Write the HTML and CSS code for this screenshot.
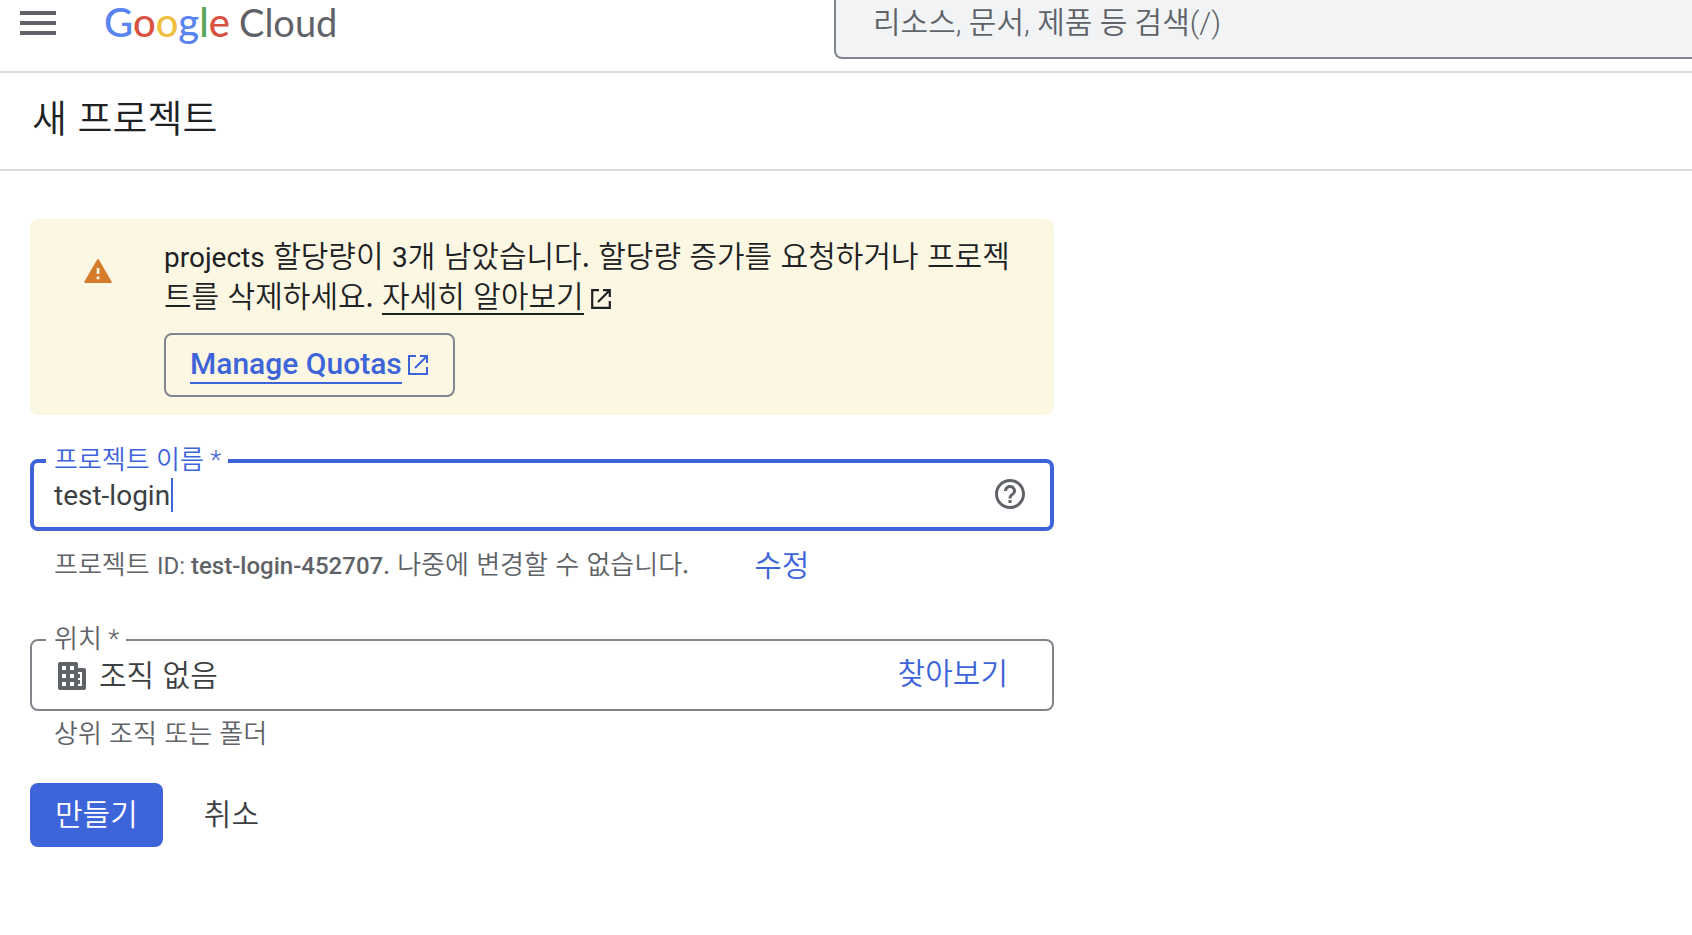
FILE: index.html
```html
<!DOCTYPE html>
<html lang="ko">
<head>
<meta charset="utf-8">
<meta name="viewport" content="width=device-width, initial-scale=1">
<title>새 프로젝트 – Google Cloud</title>
<link rel="stylesheet" href="styles.css">
</head>
<body>
<header class="topbar">
  <div class="brand">
    <button class="menu" type="button" aria-label="탐색 메뉴">
      <svg width="36" height="24" viewBox="0 0 36 24" aria-hidden="true"><path d="M0 0h36v4H0zM0 10h36v4H0zM0 20h36v4H0z" fill="currentColor"/></svg>
    </button>
    <a class="logo" href="#"><span class="logo-google"><span class="c-blue">G</span><span class="c-red">o</span><span class="c-yellow">o</span><span class="c-blue">g</span><span class="c-green">l</span><span class="c-red">e</span></span><span class="logo-cloud">Cloud</span></a>
  </div>
  <input class="search" type="search" aria-label="검색" placeholder="리소스, 문서, 제품 등 검색(/)">
</header>
<div class="titlebar"><h1 class="title">새 프로젝트</h1></div>
<main class="content">
  <section class="banner">
    <svg class="warn" width="28" height="24" viewBox="0 0 28 24" aria-hidden="true"><path fill-rule="evenodd" d="M14.8.6l12.9 22.1c.4.7 0 1.3-.7 1.3H1c-.7 0-1.1-.6-.7-1.3L13.200.6c.4-.7 1.200-.7 1.600 0zM12.700 9v6h2.700V9zM12.700 17.500v2.700h2.700v-2.700z" fill="#d47b2c"/></svg>
    <div class="banner-body">
      <p class="banner-text"><span class="latin">projects</span> 할당량이 <span class="latin">3</span>개 남았습니다. 할당량 증가를 요청하거나 프로젝트를 삭제하세요. <a class="more" href="#">자세히 알아보기</a><svg class="ext" width="20" height="20" viewBox="0 0 20 20" aria-hidden="true"><path d="M8 1.200H1.200v17.600h17.600V12M12 1.200h6.800V8M18.500 1.500L7 13" fill="none" stroke="currentColor" stroke-width="2.200"/></svg></p>
      <a class="quotas" href="#"><span class="quotas-text">Manage Quotas</span><svg width="20" height="20" viewBox="0 0 20 20" aria-hidden="true"><path d="M8 1H1v18h18V12M12 1h7V8M18.500 1.500L7 13" fill="none" stroke="currentColor" stroke-width="2"/></svg></a>
    </div>
  </section>

  <form class="form">
    <fieldset class="field field-active">
      <legend class="legend"><label for="name">프로젝트 이름 *</label></legend>
      <div class="row">
        <input class="value latin" id="name" type="text" value="test-login" spellcheck="false">
        <span class="caret"></span>
        <button class="help" type="button" aria-label="도움말">
          <svg width="30" height="30" viewBox="2 2 20 20" aria-hidden="true"><path d="M11 18h2v-2h-2v2zm1-16C6.480 2 2 6.480 2 12s4.480 10 10 10 10-4.480 10-10S17.520 2 12 2zm0 18c-4.410 0-8-3.590-8-8s3.590-8 8-8 8 3.590 8 8-3.590 8-8 8zm0-14c-2.210 0-4 1.790-4 4h2c0-1.100.9-2 2-2s2 .9 2 2c0 2-3 1.750-3 5h2c0-2.250 3-2.500 3-5 0-2.210-1.790-4-4-4z" fill="currentColor"/></svg>
        </button>
      </div>
    </fieldset>
    <div class="hint hint-id">
      <span>프로젝트 <span class="latin-small">ID: <b>test-login-452707.</b></span> 나중에 변경할 수 없습니다.</span>
      <button class="link" type="button">수정</button>
    </div>

    <fieldset class="field">
      <legend class="legend"><label for="place">위치 *</label></legend>
      <div class="row row-place">
        <svg class="org" width="28" height="28" viewBox="0 0 28 28" aria-hidden="true"><path fill-rule="evenodd" d="M2 0h16a2 2 0 0 1 2 2v4h6a2 2 0 0 1 2 2v18a2 2 0 0 1-2 2H2a2 2 0 0 1-2-2V2a2 2 0 0 1 2-2zM4 4v4h4V4zM12 4v4h4V4zM4 12v4h4v-4zM12 12v4h4v-4zM4 20v4h4v-4zM12 20v4h4v-4zM20 10v2h2v4h-2v2h2v4h-2v2h4V10z" fill="currentColor"/></svg>
        <input class="value" id="place" type="text" value="조직 없음" readonly>
        <button class="link" type="button">찾아보기</button>
      </div>
    </fieldset>
    <p class="hint">상위 조직 또는 폴더</p>
    <div class="actions">
      <button class="btn primary" type="submit">만들기</button>
      <button class="btn plain" type="button">취소</button>
    </div>
  </form>
</main>
</body>
</html>
```
FILE: styles.css
```css
* { box-sizing: border-box; }

body {
  margin: 0;
  background: #fff;
  color: #202124;
  font-family: "Noto Sans CJK KR", sans-serif;
  font-size: 30px;
  font-weight: 350;
  line-height: 40px;
}

button, input {
  font: inherit;
  color: inherit;
  background: none;
  border: 0;
  padding: 0;
  margin: 0;
}

button { cursor: pointer; }
svg { display: block; flex: none; }

.latin { font-family: Roboto, "Noto Sans CJK KR", sans-serif; font-size: 28px; font-weight: 400; line-height: 32px; }
.latin-small { font-family: Roboto, sans-serif; font-size: 24px; font-weight: 400; line-height: 28px; }
.latin-small b { font-weight: 500; }

.topbar {
  display: grid;
  grid-template-columns: 834px 1fr;
  align-items: start;
  height: 73px;
  border-bottom: 2px solid #dadce0;
}

.brand { display: flex; align-items: center; gap: 48px; height: 46px; padding-left: 20px; }
.menu { color: #5f6368; }

.logo {
  display: flex;
  align-items: baseline;
  gap: 9px;
  padding-bottom: 3px;
  color: #5f6368;
  font-family: Lato, sans-serif;
  font-size: 40px;
  font-weight: 400;
  text-decoration: none;
}
.logo-google { font-weight: 500; }
.logo-cloud { font-size: 38px; }
.c-blue { color: #5a84f0; }
.c-red { color: #d8523f; }
.c-yellow { color: #f0bf40; }
.c-green { color: #58a55c; }

.search {
  width: 100%;
  height: 59px;
  padding: 0 37px 12px;
  background: #f1f3f4;
  border: 2px solid #80868b;
  border-width: 0 0 2px 2px;
  border-radius: 0 0 0 8px;
  outline: none;
  font-family: Roboto, "Noto Sans CJK KR", sans-serif;
}
.search::placeholder { color: #5f6368; opacity: 1; }

.titlebar {
  display: flex;
  align-items: center;
  height: 98px;
  padding: 0 32px 10px;
  border-bottom: 2px solid #dadce0;
}
.title { margin: 0; font-size: 38px; font-weight: 350; }

.content { max-width: 1054px; padding: 48px 0 0 30px; }

.banner {
  display: flex;
  align-items: flex-start;
  gap: 52px;
  padding: 15px 40px 18px 54px;
  background: #fcf7e2;
  border-radius: 8px;
}
.warn { margin-top: 25px; }
.banner-text { margin: 0 0 19px; word-break: break-all; }
.more {
  color: inherit;
  text-decoration: none;
  background: linear-gradient(currentColor, currentColor) 0 calc(100% - 1px) / 100% 2px no-repeat;
}
.ext { display: inline-block; margin-left: 7px; vertical-align: -2px; }

.quotas {
  display: inline-flex;
  align-items: center;
  gap: 6px;
  height: 64px;
  padding: 0 25px 0 24px;
  border: 2px solid #80868b;
  border-radius: 8px;
  color: #3e64da;
  font-family: Roboto, sans-serif;
  font-size: 30px;
  font-weight: 500;
  text-decoration: none;
  vertical-align: top;
}
.quotas-text { line-height: 36px; border-bottom: 2px solid; }

.form { padding-top: 30px; }

.field {
  min-width: 0;
  margin: 0;
  padding: 0 24px 0 14px;
  border: 2px solid #80868b;
  border-radius: 8px;
}
.field-active { padding: 0 21px 0 12px; border: 4px solid #3e64da; }
.field-active .legend { color: #3e64da; }

.legend {
  padding: 0 7px 2px 8px;
  color: #5f6368;
  font-family: Roboto, "Noto Sans CJK KR", sans-serif;
  font-size: 26px;
  line-height: 30px;
}

.row { position: relative; display: flex; align-items: center; height: 50px; padding: 0 4px 12px 8px; }
.row-place { height: 53px; padding: 0 20px 14px 12px; gap: 13px; }
.value { flex: 1; min-width: 0; color: #3c4043; outline: none; }
.row-place .value { padding-bottom: 6px; }
.row-place .link { padding-bottom: 10px; }
.field-active .value { caret-color: transparent; }
.caret { position: absolute; left: 125px; top: 1px; width: 2px; height: 34px; background: #3e64da; }
.help, .org { color: #5f6368; }
.help { padding-bottom: 4px; }
.link { color: #3e64da; }

.hint {
  display: flex;
  align-items: center;
  margin: 0;
  padding: 0 24px;
  color: #5f6368;
  font-size: 26px;
  line-height: 42px;
}
.hint-id { gap: 65px; height: 93px; padding-bottom: 30px; }
.hint-id .link { font-size: 30px; }

.actions { display: flex; gap: 16px; padding-top: 30px; }
.btn { height: 64px; padding: 0 25px 7px; border-radius: 8px; }
.primary { background: #3e64da; color: #fff; }
.plain { color: #3c4043; }
```
